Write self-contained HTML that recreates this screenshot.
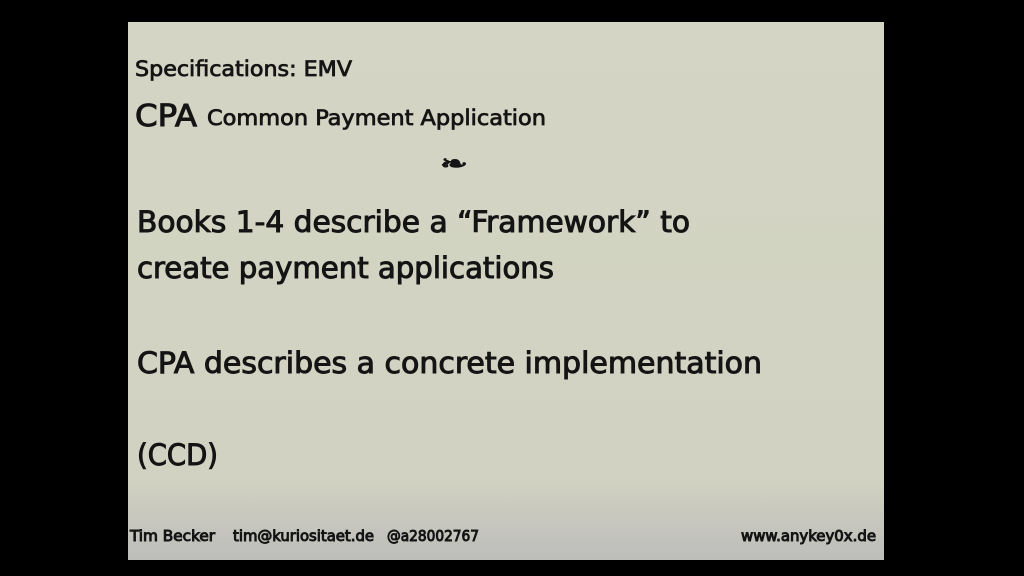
<!DOCTYPE html>
<html><head><meta charset="utf-8"><style>
html,body{margin:0;padding:0;background:#000;width:1024px;height:576px;overflow:hidden}
svg{display:block}
text{font-family:"DejaVu Sans Condensed","DejaVu Sans","Liberation Sans",sans-serif;fill:#141414;stroke:#141414;stroke-width:0.9}
</style></head><body>
<svg width="1024" height="576" viewBox="0 0 1024 576">
<defs><linearGradient id="g" x1="0" y1="0" x2="0" y2="1">
<stop offset="0" stop-color="#d4d5c4"/><stop offset="0.85" stop-color="#d1d2c1"/><stop offset="1" stop-color="#bdbdbb"/>
</linearGradient></defs>
<rect x="0" y="0" width="1024" height="576" fill="#000"/>
<rect x="128" y="22" width="756" height="538" fill="url(#g)"/>
<text x="135" y="76" font-size="21" textLength="217" lengthAdjust="spacingAndGlyphs" style="stroke-width:0.7">Specifications: EMV</text>
<text x="135" y="126" font-size="30" textLength="62" lengthAdjust="spacingAndGlyphs">CPA</text>
<text x="207" y="125" font-size="21" textLength="339" lengthAdjust="spacingAndGlyphs" style="stroke-width:0.7">Common Payment Application</text>
<text x="440" y="171" font-size="22" textLength="28" lengthAdjust="spacingAndGlyphs" style="font-family:'DejaVu Sans',sans-serif">❧</text>
<text x="137" y="232" font-size="29" textLength="553" lengthAdjust="spacingAndGlyphs">Books 1-4 describe a “Framework” to</text>
<text x="137" y="278" font-size="29" textLength="417" lengthAdjust="spacingAndGlyphs">create payment applications</text>
<text x="137" y="373" font-size="29" textLength="625" lengthAdjust="spacingAndGlyphs">CPA describes a concrete implementation</text>
<text x="137" y="465" font-size="29" textLength="81" lengthAdjust="spacingAndGlyphs">(CCD)</text>
<g style="stroke-width:0.3">
<text x="130" y="541" font-size="15" textLength="85" lengthAdjust="spacingAndGlyphs">Tim Becker</text>
<text x="233" y="541" font-size="15" textLength="141" lengthAdjust="spacingAndGlyphs">tim@kuriositaet.de</text>
<text x="387" y="541" font-size="15" textLength="92" lengthAdjust="spacingAndGlyphs">@a28002767</text>
<text x="741" y="541" font-size="15" textLength="135" lengthAdjust="spacingAndGlyphs">www.anykey0x.de</text>
</g>
</svg>
</body></html>
